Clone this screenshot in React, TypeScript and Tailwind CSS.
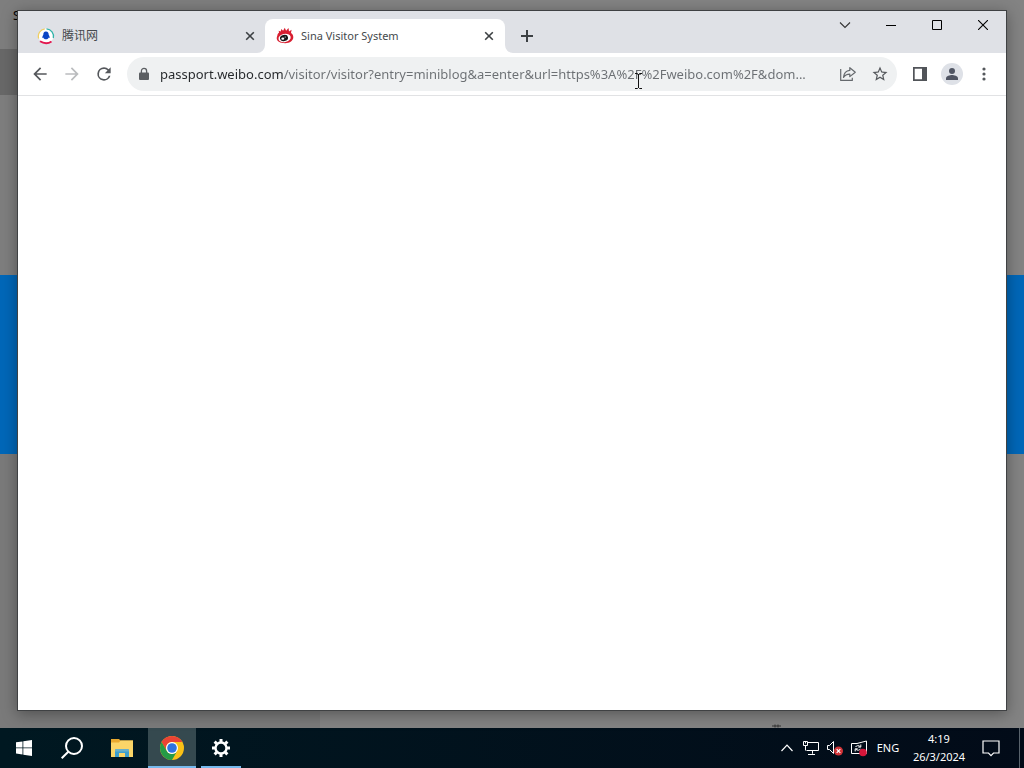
import type { ReactNode } from "react";

const URL_TEXT =
  "passport.weibo.com/visitor/visitor?entry=miniblog&a=enter&url=https%3A%2F%2Fweibo.com%2F&dom...";

function IconButton({ label, className = "", children }: { label: string; className?: string; children: ReactNode }) {
  return (
    <button type="button" aria-label={label} className={`flex shrink-0 items-center justify-center ${className}`}>
      {children}
    </button>
  );
}

function TabClose() {
  return (
    <IconButton label="Close tab" className="h-4 w-4">
      <svg width="16" height="16" viewBox="0 0 16 16" stroke="#3c4043" strokeWidth="1.6">
        <path d="M4.2 4.2l7.6 7.6M11.8 4.2l-7.6 7.6" />
      </svg>
    </IconButton>
  );
}

function TencentLogo() {
  return (
    <svg width="18" height="18" viewBox="0 0 18 18" className="shrink-0">
      <circle cx="9" cy="9" r="7.4" fill="#fff" />
      <g fill="none">
        <path d="M1.700 11.500A7.500 7.500 0 0 1 7.800 1.800" stroke="#f0cf62" strokeWidth="1.300" />
        <path d="M9.500 1.800A7.500 7.500 0 0 1 16.300 11" stroke="#2fb3a8" strokeWidth="1.300" />
        <path d="M3 14.200Q9 18 14.500 14.500" stroke="#e3174f" strokeWidth="1.900" />
      </g>
      <path d="M9 4.500c-2-.1-2.700 1.700-2.700 3.200-.8 1.300-1.300 2.900-.7 3.200.4.200.8-.5.800-.5.200 1 1 1.900 2.600 1.900s2.400-.9 2.600-1.900c0 0 .5.700.8.500.6-.4.100-1.900-.7-3.200C11.700 6.200 11 4.500 9 4.500z" fill="#0b45c4" />
    </svg>
  );
}

function SinaLogo() {
  return (
    <svg width="18" height="18" viewBox="0 0 18 18" className="shrink-0">
      <path d="M1.300 8.800C1.300 7.500 2 6.400 3 5.700L2.700 3.700l2 .9L5.300 1.900l1.800 1.900L8.800.8l1.300 2.900 2.400-2.600.5 3.300 2.600-1.600-.6 3.200c1.500 1 2.300 2.500 2.300 4.300 0 3.400-3.300 5.900-8.200 5.900S.7 14.400.7 11.300c0-1 .2-1.800.6-2.500z" fill="#d81e30" />
      <ellipse cx="8.600" cy="11" rx="6.200" ry="4.100" fill="#fff" transform="rotate(-12 8.600 11)" />
      <ellipse cx="8" cy="11" rx="4.100" ry="3" fill="#161616" transform="rotate(-12 8 11)" />
      <ellipse cx="6.800" cy="11.700" rx="1.500" ry="1.100" fill="#fff" />
      <circle cx="9.200" cy="10" r=".6" fill="#fff" />
    </svg>
  );
}

function TabStrip() {
  return (
    <header className="flex h-[42px] bg-[#dfe1e6] pl-2">
      <nav aria-label="Tabs" className="flex items-end text-[#45494c]">
        <div className="flex h-[34px] w-[239px] items-center pr-[7px] pl-[11px]">
          <TencentLogo />
          <span className="ml-[7px] flex-1 text-xs">腾讯网</span>
          <TabClose />
        </div>
        <div className="relative flex h-[34px] w-[240px] items-center rounded-t-lg bg-white pr-2 pl-[11px]">
          <svg width="8" height="8" viewBox="0 0 8 8" className="absolute bottom-0 -left-2">
            <path d="M8 0v8H0a8 8 0 0 0 8-8z" fill="#fff" />
          </svg>
          <SinaLogo />
          <span className="ml-[7px] flex-1 text-[11px]">Sina Visitor System</span>
          <TabClose />
          <svg width="8" height="8" viewBox="0 0 8 8" className="absolute -right-2 bottom-0">
            <path d="M0 0v8h8a8 8 0 0 1-8-8z" fill="#fff" />
          </svg>
        </div>
        <IconButton label="New tab" className="ml-2 h-[34px] w-7">
          <svg width="14" height="14" viewBox="0 0 14 14" stroke="#3c4043" strokeWidth="2">
            <path d="M7 1v12M1 7h12" />
          </svg>
        </IconButton>
      </nav>
      <div className="ml-auto flex h-7">
        <IconButton label="Search tabs" className="w-[46px]">
          <svg width="12" height="12" viewBox="0 0 12 12" fill="none" stroke="#333" strokeWidth="1.100">
            <path d="M1 3.500l5 5 5-5" />
          </svg>
        </IconButton>
        <IconButton label="Minimize" className="w-[46px]">
          <svg width="10" height="10" viewBox="0 0 10 10" fill="#000"><path d="M0 5h10v1H0z" /></svg>
        </IconButton>
        <IconButton label="Maximize" className="w-[46px]">
          <svg width="10" height="10" viewBox="0 0 10 10" fill="none" stroke="#000"><path d="M.5.5h9v9h-9z" /></svg>
        </IconButton>
        <IconButton label="Close" className="w-[46px]">
          <svg width="10" height="10" viewBox="0 0 10 10" stroke="#000" strokeWidth="1.100"><path d="M0 0l10 10M10 0L0 10" /></svg>
        </IconButton>
      </div>
    </header>
  );
}

function Toolbar() {
  return (
    <div className="flex h-[43px] items-center border-b border-[#e1e2e4] bg-white px-[6px]">
      <IconButton label="Back" className="h-8 w-8">
        <svg width="20" height="20" viewBox="0 0 24 24" fill="#55585c"><path d="M20 11H7.830l5.590-5.590L12 4l-8 8 8 8 1.410-1.410L7.830 13H20v-2z" /></svg>
      </IconButton>
      <IconButton label="Forward" className="h-8 w-8">
        <svg width="20" height="20" viewBox="0 0 24 24" fill="#babcbe"><path d="M12 4l-1.410 1.410L16.170 11H4v2h12.170l-5.580 5.590L12 20l8-8z" /></svg>
      </IconButton>
      <IconButton label="Reload" className="h-8 w-8">
        <svg width="20" height="20" viewBox="0 0 24 24" fill="#55585c"><path d="M17.650 6.350A7.960 7.960 0 0 0 12 4a8 8 0 1 0 7.730 10h-2.080A6 6 0 1 1 12 6c1.660 0 3.140.69 4.220 1.780L13 11h7V4l-2.350 2.350z" /></svg>
      </IconButton>
      <div className="ml-[7px] flex h-[34px] min-w-0 flex-1 items-center rounded-full bg-[#eff1f2] pr-[1px] pl-[9px]">
        <svg width="16" height="16" viewBox="0 0 16 16" className="shrink-0">
          <path d="M4 6.500h8a1 1 0 0 1 1 1V13a1 1 0 0 1-1 1H4a1 1 0 0 1-1-1V7.500a1 1 0 0 1 1-1z" fill="#5b5e62" />
          <path d="M5.400 7V5a2.600 2.600 0 0 1 5.200 0v2" fill="none" stroke="#5b5e62" strokeWidth="1.300" />
        </svg>
        <input
          aria-label="Address"
          type="text"
          readOnly
          value={URL_TEXT}
          className="ml-2 h-6 min-w-0 flex-1 bg-linear-to-r from-[#25282b] from-[123px] to-[#6b6f73] to-[123px] bg-clip-text text-[13px] text-transparent outline-none"
        />
        <IconButton label="Share" className="h-8 w-8">
          <svg width="18" height="18" viewBox="0 0 18 18" fill="none" stroke="#65696d" strokeWidth="1.200">
            <path d="M1.700 4v11.400h11.600v-2.600M10.800 2.700l5.500 4.500-5.500 4.400V9.100c-3 0-4.900.9-6.300 3.300.4-4.200 2.800-6.700 6.300-7z" strokeLinejoin="round" />
          </svg>
        </IconButton>
        <IconButton label="Bookmark this tab" className="h-8 w-8">
          <svg width="18" height="18" viewBox="0 0 24 24" fill="#55585c">
            <path d="M22 9.240l-7.190-.62L12 2 9.190 8.630 2 9.240l5.460 4.730L5.820 21 12 17.270 18.180 21l-1.630-7.030L22 9.240zM12 15.400l-3.760 2.270 1-4.280-3.320-2.880 4.380-.38L12 6.100l1.710 4.040 4.380.38-3.320 2.880 1 4.280L12 15.400z" />
          </svg>
        </IconButton>
      </div>
      <IconButton label="Side panel" className="ml-[7px] h-8 w-8">
        <svg width="14" height="14" viewBox="0 0 14 14"><path d="M9 0h5v14H9z" fill="#6b6e72" /><path d="M0 0h14v14H0zM1.700 1.700v10.600H9V1.700z" fillRule="evenodd" fill="#515459" /></svg>
      </IconButton>
      <IconButton label="Profile" className="h-8 w-8">
        <svg width="22" height="22" viewBox="0 0 22 22">
          <circle cx="11" cy="11" r="11" fill="#dee1e7" />
          <g fill="#505563"><circle cx="11" cy="8" r="3" /><path d="M5 17v-1.800c0-2.100 4-3.200 6-3.200s6 1.100 6 3.200V17z" /></g>
        </svg>
      </IconButton>
      <IconButton label="Menu" className="h-8 w-8">
        <svg width="4" height="14" viewBox="0 0 4 14" fill="#55585c"><circle cx="2" cy="2" r="1.600" /><circle cx="2" cy="7" r="1.600" /><circle cx="2" cy="12" r="1.600" /></svg>
      </IconButton>
    </div>
  );
}

function BrowserWindow() {
  return (
    <section className="absolute inset-x-[17px] top-[10px] bottom-[17px] flex flex-col border border-[#3f4143] bg-white shadow-[0_3px_14px_rgba(0,0,0,0.35)]">
      <TabStrip />
      <Toolbar />
      <main className="flex-1" />
    </section>
  );
}

function Desktop() {
  return (
    <div className="flex h-full flex-col bg-[#838383]">
      <div className="h-[49px] w-80 bg-[#7e7e7e] pt-[8px] pl-[13px] text-xs leading-4 text-black">S</div>
      <div className="h-[46px] w-80 bg-[#686868]" />
      <div className="h-[180px] w-80 bg-[#7e7e7e]" />
      <div className="h-[179px] bg-[#0067b8]" />
      <div className="w-80 flex-1 bg-[#7a7a7a]" />
    </div>
  );
}

function TextCursor() {
  return (
    <svg width="9" height="16" viewBox="0 0 9 16" fill="none" stroke="#111" className="absolute top-[73px] left-[634px]">
      <path d="M1 .5h2.500l1 1 1-1H8M4.500 1v14M1 15.500h2.500l1-1 1 1H8" />
    </svg>
  );
}

function Taskbar() {
  return (
    <footer className="flex h-10 shrink-0 bg-linear-to-r from-[#001821] to-[#020b18] text-[11px] text-white">
      <IconButton label="Start" className="w-12">
        <svg width="16" height="16" viewBox="0 0 16 16" fill="#fff"><path d="M0 2.300l6.500-.9v6.100H0zM7.300 1.300L16 0v7.500H7.300zM0 8.300h6.500v6.100L0 13.500zM7.300 8.300H16V16l-8.700-1.300z" /></svg>
      </IconButton>
      <IconButton label="Search" className="w-12">
        <svg width="24" height="24" viewBox="0 0 24 24" fill="none" stroke="#fff" strokeWidth="2"><circle cx="14" cy="10" r="8" /><path d="M8.300 15.700L1.700 22.300" /></svg>
      </IconButton>
      <IconButton label="File Explorer" className="w-[52px]">
        <svg width="22" height="18" viewBox="0 0 22 18">
          <path d="M0 0h8l1.500 1.500H22V18H0z" fill="#e9a92f" />
          <path d="M0 3.500h8l1.500-2H22V18H0z" fill="#fbd568" />
          <path d="M4 18v-7l1-1h12l1 1v7h-4v-4H8v4z" fill="#3d9fce" />
          <path d="M4 11l1-1h12l1 1v1.500H4z" fill="#68afc9" />
        </svg>
      </IconButton>
      <IconButton label="Chrome" className="w-12 border-b-2 border-[#76b9ed] bg-[#35494f] pt-[2px]">
        <svg width="24" height="24" viewBox="0 0 24 24">
          <circle cx="12" cy="12" r="12" fill="#fbc116" />
          <path d="M1.610 6A12 12 0 0 1 22.390 6H12a6 6 0 0 0-5.200 9z" fill="#ea4335" />
          <path d="M1.610 6A12 12 0 0 0 12 24l5.200-9A6 6 0 0 1 6.800 15z" fill="#259b46" />
          <circle cx="12" cy="12" r="6" fill="#fff" />
          <circle cx="12" cy="12" r="4.800" fill="#2f73e0" />
        </svg>
      </IconButton>
      <IconButton label="Settings" className="ml-[5px] w-10 border-b-2 border-[#76b9ed] pt-[2px]">
        <svg width="20" height="20" viewBox="0 0 20 20" fill="none" stroke="#fff">
          <circle cx="10" cy="10" r="5.500" strokeWidth="2.400" />
          <path d="M10 1v3M10 16v3M1 10h3M16 10h3M3.600 3.600l2.200 2.200M14.200 14.200l2.200 2.200M3.600 16.400l2.200-2.200M14.200 5.800l2.200-2.200" strokeWidth="3" />
        </svg>
      </IconButton>
      <div className="ml-auto flex">
        <IconButton label="Show hidden icons" className="w-6">
          <svg width="12" height="8" viewBox="0 0 12 8" fill="none" stroke="#fff" strokeWidth="1.200"><path d="M.5 7L6 1.200 11.500 7" /></svg>
        </IconButton>
        <IconButton label="Network" className="w-6">
          <svg width="18" height="16" viewBox="0 0 18 16" fill="none" stroke="#fff">
            <path d="M5.500 2.500h11v8H4.500M10.500 10.500v3M6 14.500h7M10.500 13.500v1M1.500 1.500h4v4h-4zM3.500 5.500v5M3.500 1.500v2" />
          </svg>
        </IconButton>
        <IconButton label="Volume muted" className="w-6">
          <svg width="18" height="16" viewBox="0 0 18 16" fill="none" stroke="#fff">
            <path d="M1.500 5.500h2l4-4v12l-4-4h-2z" />
            <circle cx="12.500" cy="11" r="4.500" fill="#d13438" stroke="none" />
            <path d="M10.700 9.200l3.600 3.600M14.300 9.200l-3.600 3.600" strokeWidth="1.200" />
          </svg>
        </IconButton>
        <IconButton label="Update status" className="w-6">
          <svg width="18" height="18" viewBox="0 0 18 18" fill="none" stroke="#fff">
            <path d="M1.500 4.500H7l9.500-2.500v12.500h-15z" />
            <path d="M5.500 8c.8-1.600 3.300-1.800 4.800-.4M10.800 5.500v2.600H8.300M10.500 9.800c-.8 1.700-3.300 1.900-4.700.4M5.200 12.400V9.800h2.500" />
            <circle cx="13" cy="13.500" r="3.800" fill="#d5163a" stroke="none" />
          </svg>
        </IconButton>
        <button type="button" className="w-[34px]">ENG</button>
        <button type="button" className="w-[68px] text-center leading-[18px]">
          4:19<br />26/3/2024
        </button>
        <IconButton label="Notifications" className="w-9">
          <svg width="18" height="17" viewBox="0 0 18 17" fill="none" stroke="#fff" strokeWidth="1.200"><path d="M1 1h16v12h-5.500L9 15.700 6.500 13H1z" /></svg>
        </IconButton>
        <button type="button" aria-label="Show desktop" className="ml-[10px] w-[5px] border-l border-[#59636c]" />
      </div>
    </footer>
  );
}

export default function App() {
  return (
    <div className="flex h-screen flex-col overflow-hidden font-['Noto_Sans','Noto_Sans_CJK_SC',sans-serif]">
      <div className="relative min-h-0 flex-1">
        <Desktop />
        <BrowserWindow />
        <svg width="10" height="4" viewBox="0 0 10 4" stroke="#333" className="absolute bottom-0 left-[772px]">
          <path d="M0 2h9M3 .5v3M6 .5v3" />
        </svg>
        <TextCursor />
      </div>
      <Taskbar />
    </div>
  );
}
